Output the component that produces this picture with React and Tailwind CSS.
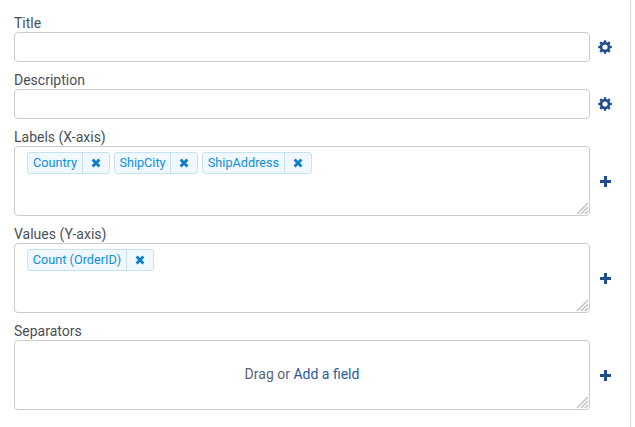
import React from 'react';

const Cross = () => (
  <svg width="10" height="10" viewBox="0 0 10 10" className="mb-[1px] fill-[#0d7fc7]">
    <path d="M2.6 0.6 L5 3 L7.4 0.6 L9.4 2.6 L7 5 L9.4 7.4 L7.4 9.4 L5 7 L2.6 9.4 L0.6 7.4 L3 5 L0.6 2.6 Z" />
  </svg>
);

const Plus = () => (
  <svg width="11" height="11" viewBox="0 0 11 11" className="fill-[#1f4e8f]">
    <path d="M4 0 H7 V4 H11 V7 H7 V11 H4 V7 H0 V4 H4 Z" />
  </svg>
);

const Gear = () => (
  <svg width="14" height="14" viewBox="0 0 14 14" className="-ml-[1px] fill-none stroke-[#1f4e8f]">
    <circle cx="7" cy="7" r="3.9" strokeWidth="2.6" />
    <path
      d="M7 0.2 V2.5 M7 11.5 V13.8 M0.2 7 H2.5 M11.5 7 H13.8 M2.2 2.2 L3.8 3.8 M10.2 10.2 L11.8 11.8 M11.8 2.2 L10.2 3.8 M3.8 10.2 L2.2 11.8"
      strokeWidth="2.4"
    />
  </svg>
);

const Grip = () => (
  <svg width="13" height="13" viewBox="0 0 13 13" className="absolute right-0 bottom-0 stroke-[#c4c4c4]">
    <path d="M1 12 L12 1 M5 12 L12 5 M9 12 L12 9" strokeWidth="1.6" />
  </svg>
);

const Chip = ({ label, textWidth }) => {
  return (
    <div className="flex h-[22px] items-stretch rounded-[3px] border border-[#c5e3f1] bg-[#f0f8fd] text-[12.7px] text-[#0f8fd6]">
      <span className={`flex items-center justify-center border-r border-[#c5e3f1] ${textWidth}`}>{label}</span>
      <span className="flex w-[26px] items-center justify-center">
        <Cross />
      </span>
    </div>
  );
};

const Field = ({ label, icon, tall, children }) => {
  return (
    <div className="flex flex-col">
      <label className="h-[18px] leading-[18px] text-[#4a4f55]">{label}</label>
      <div className="flex items-center">
        <div
          className={`relative w-[576px] shrink-0 rounded-[4px] border border-[#cccccc] bg-white ${tall ? 'h-[70px]' : 'h-[30px]'}`}
        >
          {children}
          {tall && <Grip />}
        </div>
        <span className="flex w-[31px] shrink-0 justify-center">{icon}</span>
      </div>
    </div>
  );
};

const App = () => {
  return (
    <div className="h-[427px] w-[635px] overflow-hidden bg-white font-['Roboto',sans-serif] text-[14px]">
      <div className="flex h-full w-[631px] flex-col gap-[9px] border-r border-[#dcdcdc] pt-[14px] pl-[14px]">
        <Field label="Title" icon={<Gear />} />
        <Field label="Description" icon={<Gear />} />
        <Field label="Labels (X-axis)" icon={<Plus />} tall>
          <div className="flex gap-[4px] pt-[5px] pl-[12px]">
            <Chip label="Country" textWidth="w-[55px]" />
            <Chip label="ShipCity" textWidth="w-[56px]" />
            <Chip label="ShipAddress" textWidth="w-[82px]" />
          </div>
        </Field>
        <Field label="Values (Y-axis)" icon={<Plus />} tall>
          <div className="flex gap-[4px] pt-[5px] pl-[12px]">
            <Chip label="Count (OrderID)" textWidth="w-[99px]" />
          </div>
        </Field>
        <Field label="Separators" icon={<Plus />} tall>
          <div className="flex h-full items-center justify-center pb-[2px] text-[#5c6670]">
            <span>
              Drag or <a className="text-[#2a5a9c]">Add a field</a>
            </span>
          </div>
        </Field>
      </div>
    </div>
  );
};

export default App;
